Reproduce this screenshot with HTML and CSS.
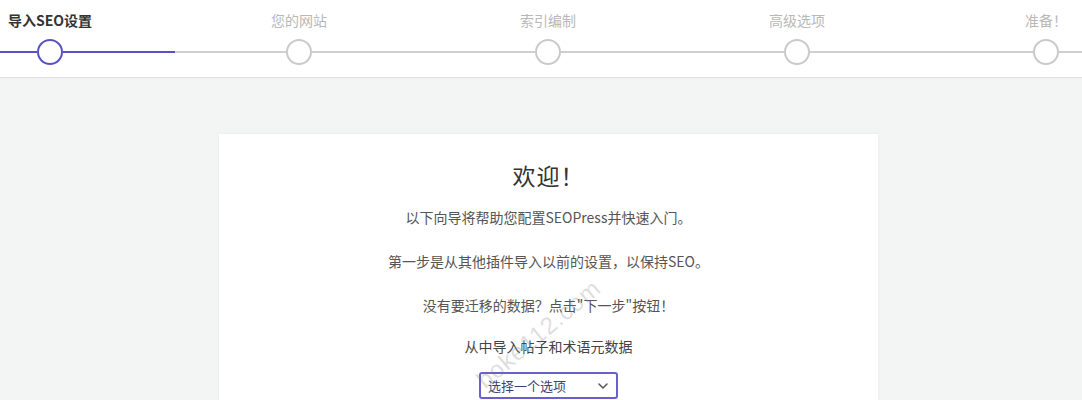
FILE: index.html
```html
<!DOCTYPE html>
<html lang="zh-CN">
<head>
<meta charset="utf-8">
<link rel="stylesheet" href="styles.css">
</head>
<body>
<header class="steps-bar">
  <ol class="steps">
    <li class="step active">
      <span class="step-label">导入SEO设置</span>
      <div class="track"><span class="seg"></span><span class="dot"></span><span class="seg"></span></div>
    </li>
    <li class="step">
      <span class="step-label">您的网站</span>
      <div class="track"><span class="seg"></span><span class="dot"></span><span class="seg"></span></div>
    </li>
    <li class="step">
      <span class="step-label">索引编制</span>
      <div class="track"><span class="seg"></span><span class="dot"></span><span class="seg"></span></div>
    </li>
    <li class="step">
      <span class="step-label">高级选项</span>
      <div class="track"><span class="seg"></span><span class="dot"></span><span class="seg"></span></div>
    </li>
    <li class="step">
      <span class="step-label">准备！</span>
      <div class="track"><span class="seg"></span><span class="dot"></span><span class="seg"></span></div>
    </li>
  </ol>
</header>
<main class="content">
  <section class="card">
    <h1 class="title">欢迎！</h1>
    <p class="text">以下向导将帮助您配置SEOPress并快速入门。</p>
    <p class="text">第一步是从其他插件导入以前的设置，以保持SEO。</p>
    <p class="text">没有要迁移的数据？点击"下一步"按钮！</p>
    <p class="text strong">从中导入帖子和术语元数据</p>
    <div class="select">
      <span>选择一个选项</span>
      <svg class="chev" width="10" height="6" viewBox="0 0 10 6"><path d="M1 1l4 4 4-4" fill="none" stroke="#555" stroke-width="1.5" stroke-linecap="round" stroke-linejoin="round"/></svg>
    </div>
    <span class="watermark">boke112.com</span>
  </section>
</main>
</body>
</html>
```

FILE: styles.css
```css
* { box-sizing: border-box; }
html, body { margin: 0; padding: 0; }
body {
  background: #f3f4f4;
  font-family: "Noto Sans CJK SC", "Open Sans", sans-serif;
  width: 1082px;
  height: 400px;
  overflow: hidden;
}
.steps-bar {
  background: #fff;
  height: 78px;
  border-bottom: 1px solid #dedede;
  overflow: hidden;
}
.steps {
  list-style: none;
  margin: 0 0 0 -74.5px;
  padding: 10px 0 0;
  display: flex;
}
.step {
  flex: none;
  width: 249px;
  display: flex;
  flex-direction: column;
  align-items: center;
}
.step-label {
  font-size: 14px;
  line-height: 20px;
  color: #b8b8b8;
  white-space: nowrap;
}
.step.active .step-label { color: #333; font-weight: 700; }
.track {
  margin-top: 9px;
  width: 100%;
  display: flex;
  align-items: center;
  height: 26px;
}
.seg { flex: 1; height: 2px; background: #cfcfcf; }
.dot {
  flex: none;
  width: 26px;
  height: 26px;
  border-radius: 50%;
  border: 2px solid #cacaca;
  background: #fff;
}
.step.active .seg { background: #5b51c6; }
.step.active .dot { border-color: #5b51c6; border-width: 2.5px; }
.content { padding-top: 56px; }
.card {
  position: relative;
  margin-left: 219px;
  width: 659px;
  height: 300px;
  background: #fff;
  box-shadow: 0 0 3px rgba(0,0,0,0.06);
  padding-top: 25px;
  display: flex;
  flex-direction: column;
  align-items: center;
  text-align: center;
  overflow: hidden;
}
.title {
  margin: 0;
  font-size: 23px;
  line-height: 32px;
  font-weight: 400;
  color: #333;
  letter-spacing: 1px;
}
.text {
  margin: 15px 0 0;
  font-size: 14px;
  line-height: 22px;
  color: #555;
}
.text + .text { margin-top: 22px; }
.text.strong { margin-top: 19px; color: #444; }
.select {
  margin-top: 15px;
  width: 139px;
  height: 27px;
  border: 2px solid #6a5fd0;
  border-radius: 3px;
  display: flex;
  align-items: center;
  justify-content: space-between;
  padding: 0 8px 0 7px;
  font-size: 13px;
  color: #3b4470;
}
.chev { margin-top: 1px; }
.watermark {
  position: absolute;
  left: 270px;
  top: 232px;
  font-family: "Liberation Sans", sans-serif;
  font-size: 24px;
  line-height: 28px;
  color: rgba(120,120,120,0.25);
  transform: rotate(-40deg);
  transform-origin: left bottom;
  letter-spacing: 1px;
}
```
